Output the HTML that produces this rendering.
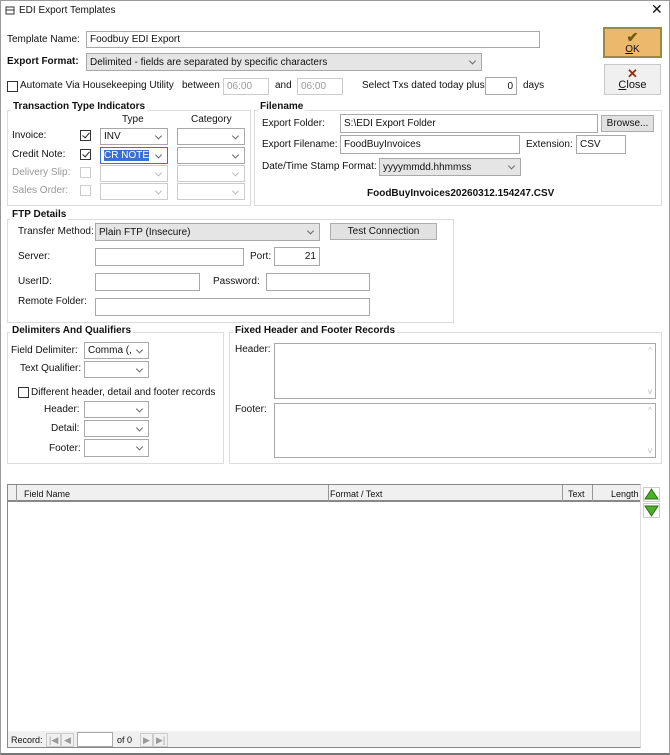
<!DOCTYPE html>
<html><head><meta charset="utf-8">
<style>
*{box-sizing:border-box;margin:0;padding:0}
body{width:670px;height:755px;background:#fff;font-family:"Liberation Sans",Arial,sans-serif;font-size:10px;color:#111;position:relative;overflow:hidden}
.a{position:absolute;white-space:nowrap;line-height:12px}
.b{font-weight:bold}
.in,.sel{position:absolute;background:#fff;border:1px solid #a8a8a8;padding:0 3px;display:flex;align-items:center;white-space:nowrap}
.r{justify-content:flex-end}
.ta{align-items:flex-start}
.sel::after{content:"";position:absolute;right:6px;top:50%;width:4px;height:4px;border-right:1px solid #666;border-bottom:1px solid #666;transform:translateY(-70%) rotate(45deg)}
.g{background:#e5e5e5}
.dis{border-color:#ccc}
.dis::after{border-color:#bbb}
.grp{position:absolute;border:1px solid #dcdcdc}
.gt{position:absolute;background:#fff;font-weight:bold;padding:0 2px;line-height:12px}
.cb{position:absolute;width:11px;height:11px;border:1px solid #333;background:#fff}
.cbd{border-color:#ccc}
.chk::after{content:"";position:absolute;left:3px;top:0px;width:3px;height:6px;border-right:1.3px solid #222;border-bottom:1.3px solid #222;transform:rotate(40deg)}
.btn{position:absolute;background:#e1e1e1;border:1px solid #adadad;text-align:center}
.gray{color:#999}
</style></head><body>
<div style="position:absolute;left:0;top:0;width:670px;height:755px;border:1px solid #9a9a9a;border-bottom:2px solid #777"></div>
<svg class="a" style="left:5px;top:5px" width="11" height="11"><rect x="1" y="2" width="8" height="7" fill="none" stroke="#333"/><path d="M1 5h8" stroke="#333"/></svg>
<div class="a" style="left:19px;top:5px">EDI Export Templates</div>
<div class="a" style="left:651px;top:3px;font-size:14px">✕</div>

<div class="a" style="left:7px;top:34px">Template Name:</div>
<div class="in" style="left:86px;top:31px;width:454px;height:17px">Foodbuy EDI Export</div>
<div class="a b" style="left:7px;top:56px">Export Format:</div>
<div class="sel g" style="left:86px;top:53px;width:396px;height:18px">Delimited - fields are separated by specific characters</div>

<div style="position:absolute;left:603px;top:27px;width:59px;height:31px;background:#ecb86c;border:2px solid #9b8a40;text-align:center;line-height:11px;padding-top:2px">
<div style="color:#6b5a10;font-size:14px;font-weight:bold;line-height:13px">✔</div><u>O</u>K</div>
<div style="position:absolute;left:604px;top:64px;width:57px;height:31px;background:#f0f0f0;border:1px solid #c8c8c8;text-align:center;line-height:11px;padding-top:2px;font-size:11px">
<div style="color:#9b2a10;font-size:13px;font-weight:bold;line-height:13px">✕</div><u>C</u>lose</div>

<div class="cb" style="left:7px;top:81px"></div>
<div class="a" style="left:20px;top:80px">Automate Via Housekeeping Utility</div>
<div class="a" style="left:182px;top:80px">between</div>
<div class="in dis" style="left:223px;top:78px;width:46px;height:17px;color:#999">06:00</div>
<div class="a" style="left:275px;top:80px">and</div>
<div class="in dis" style="left:297px;top:78px;width:46px;height:17px;color:#999">06:00</div>
<div class="a" style="left:362px;top:80px">Select Txs dated today plus</div>
<div class="in r" style="left:485px;top:77px;width:32px;height:18px">0</div>
<div class="a" style="left:523px;top:80px">days</div>

<div class="grp" style="left:7px;top:110px;width:244px;height:96px"></div>
<div class="gt" style="left:11px;top:101px">Transaction Type Indicators</div>
<div class="a" style="left:122px;top:114px">Type</div>
<div class="a" style="left:191px;top:114px">Category</div>
<div class="a" style="left:12px;top:130px">Invoice:</div>
<div class="a" style="left:12px;top:149px">Credit Note:</div>
<div class="a gray" style="left:12px;top:167px">Delivery Slip:</div>
<div class="a gray" style="left:12px;top:185px">Sales Order:</div>
<div class="cb chk" style="left:80px;top:130px"></div>
<div class="cb chk" style="left:80px;top:149px"></div>
<div class="cb cbd" style="left:80px;top:167px"></div>
<div class="cb cbd" style="left:80px;top:185px"></div>
<div class="sel" style="left:100px;top:128px;width:68px;height:17px">INV</div>
<div class="sel" style="left:100px;top:147px;width:68px;height:17px;border-color:#3c6fd6"><span style="background:#3b6fd8;color:#fff">CR NOTE</span></div>
<div class="sel dis" style="left:100px;top:165px;width:68px;height:17px"></div>
<div class="sel dis" style="left:100px;top:183px;width:68px;height:17px"></div>
<div class="sel" style="left:177px;top:128px;width:68px;height:17px"></div>
<div class="sel" style="left:177px;top:147px;width:68px;height:17px"></div>
<div class="sel dis" style="left:177px;top:165px;width:68px;height:17px"></div>
<div class="sel dis" style="left:177px;top:183px;width:68px;height:17px"></div>

<div class="grp" style="left:254px;top:110px;width:408px;height:96px"></div>
<div class="gt" style="left:258px;top:101px">Filename</div>
<div class="a" style="left:262px;top:118px">Export Folder:</div>
<div class="in" style="left:340px;top:114px;width:258px;height:19px">S:\EDI Export Folder</div>
<div class="btn" style="left:601px;top:115px;width:53px;height:17px;line-height:15px">Browse...</div>
<div class="a" style="left:262px;top:139px">Export Filename:</div>
<div class="in" style="left:340px;top:135px;width:180px;height:19px">FoodBuyInvoices</div>
<div class="a" style="left:526px;top:139px">Extension:</div>
<div class="in" style="left:576px;top:135px;width:50px;height:19px">CSV</div>
<div class="a" style="left:262px;top:161px">Date/Time Stamp Format:</div>
<div class="sel g" style="left:379px;top:158px;width:142px;height:18px">yyyymmdd.hhmmss</div>
<div class="a b" style="left:367px;top:188px">FoodBuyInvoices20260312.154247.CSV</div>

<div class="grp" style="left:7px;top:219px;width:447px;height:104px"></div>
<div class="gt" style="left:10px;top:209px">FTP Details</div>
<div class="a" style="left:18px;top:226px">Transfer Method:</div>
<div class="sel g" style="left:95px;top:223px;width:225px;height:18px">Plain FTP (Insecure)</div>
<div class="btn" style="left:330px;top:223px;width:107px;height:17px;line-height:15px">Test Connection</div>
<div class="a" style="left:18px;top:251px">Server:</div>
<div class="in" style="left:95px;top:248px;width:149px;height:18px"></div>
<div class="a" style="left:250px;top:251px">Port:</div>
<div class="in r" style="left:274px;top:247px;width:46px;height:19px">21</div>
<div class="a" style="left:18px;top:276px">UserID:</div>
<div class="in" style="left:95px;top:273px;width:105px;height:18px"></div>
<div class="a" style="left:213px;top:276px">Password:</div>
<div class="in" style="left:266px;top:273px;width:104px;height:18px"></div>
<div class="a" style="left:18px;top:296px">Remote Folder:</div>
<div class="in" style="left:95px;top:298px;width:275px;height:18px"></div>

<div class="grp" style="left:7px;top:332px;width:217px;height:132px"></div>
<div class="gt" style="left:10px;top:325px">Delimiters And Qualifiers</div>
<div class="a" style="left:11px;top:345px">Field Delimiter:</div>
<div class="sel" style="left:84px;top:342px;width:65px;height:17px">Comma (,</div>
<div class="a" style="left:20px;top:363px">Text Qualifier:</div>
<div class="sel" style="left:84px;top:361px;width:65px;height:17px"></div>
<div class="cb" style="left:18px;top:387px"></div>
<div class="a" style="left:31px;top:387px">Different header, detail and footer records</div>
<div class="a" style="left:44px;top:404px">Header:</div>
<div class="sel" style="left:84px;top:401px;width:65px;height:17px"></div>
<div class="a" style="left:51px;top:423px">Detail:</div>
<div class="sel" style="left:84px;top:420px;width:65px;height:17px"></div>
<div class="a" style="left:49px;top:443px">Footer:</div>
<div class="sel" style="left:84px;top:439px;width:65px;height:18px"></div>

<div class="grp" style="left:229px;top:332px;width:433px;height:132px"></div>
<div class="gt" style="left:233px;top:325px">Fixed Header and Footer Records</div>
<div class="a" style="left:235px;top:344px">Header:</div>
<div class="in ta" style="left:274px;top:343px;width:382px;height:56px"><span style="position:absolute;right:3px;top:2px;color:#bbb;font-size:8px">^</span><span style="position:absolute;right:3px;bottom:2px;color:#bbb;font-size:8px">v</span></div>
<div class="a" style="left:235px;top:404px">Footer:</div>
<div class="in ta" style="left:274px;top:403px;width:382px;height:55px"><span style="position:absolute;right:3px;top:2px;color:#bbb;font-size:8px">^</span><span style="position:absolute;right:3px;bottom:2px;color:#bbb;font-size:8px">v</span></div>

<div style="position:absolute;left:7px;top:484px;width:634px;height:264px;border:1px solid #888;border-right-color:#ddd;background:#fff"></div>
<div style="position:absolute;left:8px;top:485px;width:632px;height:17px;background:#f0f0f0;border-bottom:2px solid #888"></div>
<div style="position:absolute;left:16px;top:485px;width:1px;height:17px;background:#999"></div>
<div style="position:absolute;left:328px;top:485px;width:1px;height:17px;background:#999"></div>
<div style="position:absolute;left:562px;top:485px;width:1px;height:17px;background:#999"></div>
<div style="position:absolute;left:592px;top:485px;width:1px;height:17px;background:#999"></div>
<div class="a" style="left:24px;top:488px;font-size:9px">Field Name</div>
<div class="a" style="left:330px;top:488px;font-size:9px">Format / Text</div>
<div class="a" style="left:568px;top:488px;font-size:9px">Text</div>
<div class="a" style="left:611px;top:488px;font-size:9px">Length</div>
<svg style="position:absolute;left:643px;top:487px" width="17" height="32"><rect x="0.5" y="0.5" width="16" height="14" fill="#fff" stroke="#ccc"/><path d="M2 12L8.5 2L15 12Z" fill="#4caf2a" stroke="#2e6e12"/><rect x="0.5" y="16.5" width="16" height="14" fill="#fff" stroke="#ccc"/><path d="M2 19L8.5 29L15 19Z" fill="#4caf2a" stroke="#2e6e12"/></svg>
<div style="position:absolute;left:8px;top:731px;width:632px;height:16px;background:#f0f0f0"></div>
<div class="a" style="left:11px;top:734px;font-size:9px">Record:</div>
<div class="a" style="left:46px;top:733px;font-size:9px;color:#999;border:1px solid #ccc;padding:0 2px">|◀</div>
<div class="a" style="left:61px;top:733px;font-size:9px;color:#999;border:1px solid #ccc;padding:0 2px">◀</div>
<div class="in" style="left:77px;top:732px;width:36px;height:15px"></div>
<div class="a" style="left:117px;top:734px;font-size:9px">of 0</div>
<div class="a" style="left:140px;top:733px;font-size:9px;color:#999;border:1px solid #ccc;padding:0 2px">▶</div>
<div class="a" style="left:153px;top:733px;font-size:9px;color:#999;border:1px solid #ccc;padding:0 2px">▶|</div>
</body></html>
